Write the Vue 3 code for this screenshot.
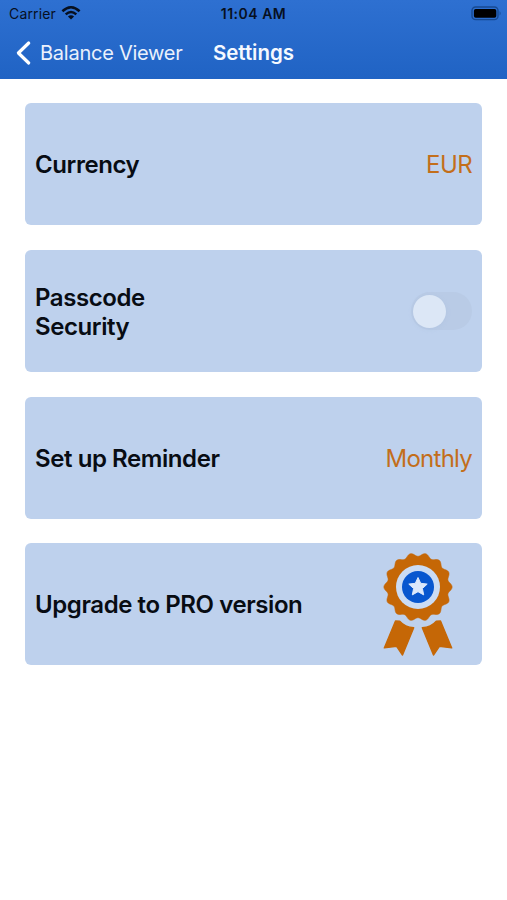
<script setup>
const rows = [
  { label: 'Currency', value: 'EUR' },
  { label: 'Passcode\nSecurity', toggle: true },
  { label: 'Set up Reminder', value: 'Monthly' },
  { label: 'Upgrade to PRO version', badge: true },
]

// Rosette outline with fourteen lobes
const points = []
for (let i = 0; i < 280; i++) {
  const a = (i / 280) * Math.PI * 2
  const r = 32.4 + 1.7 * Math.cos(14 * a)
  points.push(`${(36 + r * Math.cos(a)).toFixed(2)},${(36 + r * Math.sin(a)).toFixed(2)}`)
}
const rosette = points.join(' ')
</script>

<template>
  <div class="screen">
    <header class="header">
      <div class="status">
        <div class="carrier">
          <span class="carrier-name">Carrier</span>
          <svg class="wifi" width="20" height="14" viewBox="0 0 20 14">
            <g fill="none" stroke="#07101f" stroke-width="2.5">
              <path d="M1.4 5.2Q10 -2.6 18.6 5.2" />
              <path d="M4.7 8.4Q10 3.6 15.3 8.4" />
            </g>
            <path d="M6.9 10.4Q10 7.9 13.1 10.4L10 13.5Z" fill="#07101f" />
          </svg>
        </div>
        <span class="time">11:04 AM</span>
        <svg class="battery" width="31" height="15" viewBox="0 0 31 15">
          <rect x="1" y="1" width="26" height="12.6" rx="3.6" fill="none" stroke="#174a91" stroke-width="1.4" />
          <rect x="2.9" y="2.9" width="22.4" height="8.9" rx="1.8" fill="#000" />
          <path d="M28.6 5Q30.6 7.3 28.6 9.6Z" fill="#174a91" />
        </svg>
      </div>
      <nav class="nav">
        <svg class="chevron" width="16" height="26" viewBox="0 0 16 26">
          <path d="M13.7 3L3.4 13L13.7 23" fill="none" stroke="#fff" stroke-width="3.2" stroke-linecap="round" stroke-linejoin="round" />
        </svg>
        <span class="back">Balance Viewer</span>
        <span class="title">Settings</span>
      </nav>
    </header>
    <main class="list">
      <section v-for="row in rows" :key="row.label" class="card">
        <span class="label">{{ row.label }}</span>
        <span v-if="row.value" class="value" :class="{ monthly: row.value === 'Monthly' }">{{ row.value }}</span>
        <span v-if="row.toggle" class="toggle"><span class="knob"></span></span>
        <svg v-if="row.badge" class="badge" width="72" height="106" viewBox="0 0 72 106">
          <g fill="#c56706" stroke="#c56706" stroke-linejoin="round">
            <polygon :points="rosette" stroke-width="0.6" />
            <path d="M13.5 70L17.7 70.3Q23 76.4 31.7 76.7L20.5 104L14.6 95.3L2.3 96.9Z" stroke-width="1.4" />
            <path d="M58.5 70L54.3 70.3Q49 76.4 40.3 76.7L51.5 104L57.4 95.3L69.7 96.9Z" stroke-width="1.4" />
          </g>
          <circle cx="36" cy="36" r="22" fill="#cbdcf4" />
          <circle cx="36" cy="36" r="16" fill="#0857cf" />
          <path d="M36 26.5L38.7 32.3L45.2 33.1L40.4 37.5L41.7 43.9L36 40.7L30.3 43.9L31.6 37.5L26.8 33.1L33.3 32.3Z" fill="#dbe8fb" stroke="#dbe8fb" stroke-width="1" stroke-linejoin="round" />
        </svg>
      </section>
    </main>
  </div>
</template>

<style>
body {
  margin: 0;
  background: #fff;
}
</style>

<style scoped>
.screen {
  width: 507px;
  height: 900px;
  overflow: hidden;
  background: #fff;
  font-family: Inter, "Liberation Sans", sans-serif;
}
.header {
  box-sizing: border-box;
  height: 79px;
  background: linear-gradient(#2e70d1, #2063c4);
}
.status {
  display: grid;
  grid-template-columns: 1fr auto 1fr;
  align-items: center;
  height: 27px;
  padding: 0 5px 0 9px;
  color: #07101f;
}
.carrier {
  display: flex;
  align-items: center;
  gap: 5px;
}
.carrier-name {
  font-size: 14px;
  letter-spacing: 0.15px;
}
.wifi {
  margin-top: -2px;
}
.time {
  font-size: 14px;
  font-weight: 600;
  letter-spacing: 0.5px;
  margin-right: 4px;
}
.battery {
  justify-self: end;
}
.nav {
  display: flex;
  align-items: center;
  height: 51px;
  padding-left: 15px;
}
.back {
  width: 173px;
  margin-left: 9px;
  font-size: 20px;
  letter-spacing: -0.25px;
  color: #eaf1fc;
}
.title {
  font-size: 20.5px;
  font-weight: 600;
  letter-spacing: -0.05px;
  color: #f5f9ff;
}
.list {
  display: flex;
  flex-direction: column;
  gap: 24.7px;
  padding: 103.4px 25px 0;
  margin-top: -79px;
}
.card {
  box-sizing: border-box;
  display: flex;
  align-items: center;
  justify-content: space-between;
  height: 122px;
  padding: 0 10px;
  border-radius: 6px;
  background: #bed1ed;
}
.label {
  padding-top: 1px;
  font-size: 24px;
  line-height: 29px;
  font-weight: 600;
  letter-spacing: -0.42px;
  white-space: pre-line;
  color: #080c13;
}
.value {
  padding-top: 1px;
  font-size: 24px;
  letter-spacing: -0.6px;
  color: #c36e1b;
}
.monthly {
  letter-spacing: -0.75px;
}
.toggle {
  box-sizing: border-box;
  width: 61px;
  height: 38px;
  padding: 3px 2px 2px;
  border-radius: 19px;
  background: #b9cbe6;
}
.knob {
  display: block;
  width: 33px;
  height: 33px;
  border-radius: 50%;
  background: #dce7f6;
  box-shadow: 0 1px 4px #a9bedd66;
}
.badge {
  margin-right: 18.5px;
  margin-top: -1px;
}
</style>
